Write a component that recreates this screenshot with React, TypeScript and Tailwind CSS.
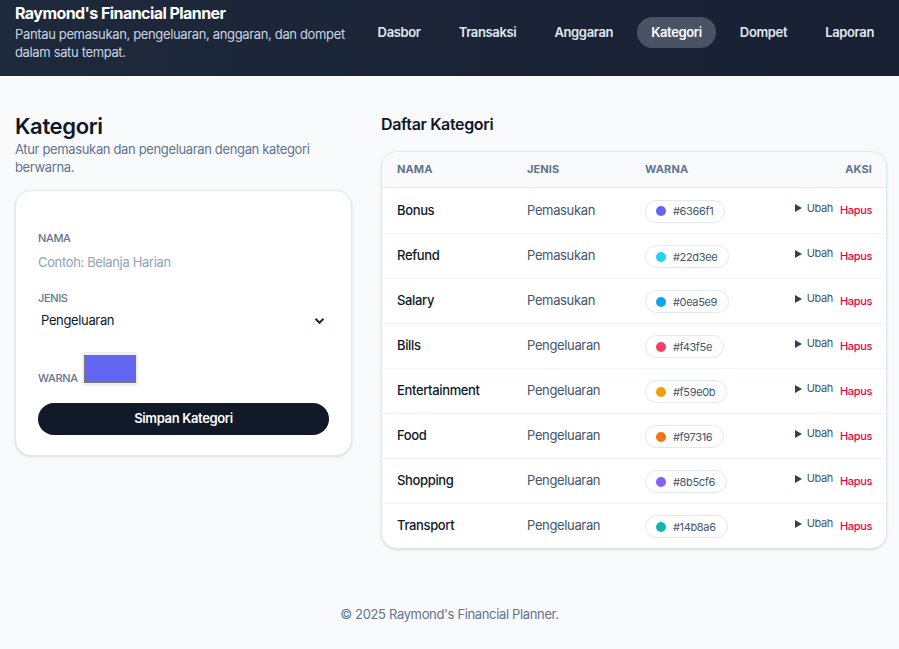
import React from "react";

const categories = [
  { name: "Bonus", type: "Pemasukan", color: "#6366f1" },
  { name: "Refund", type: "Pemasukan", color: "#22d3ee" },
  { name: "Salary", type: "Pemasukan", color: "#0ea5e9" },
  { name: "Bills", type: "Pengeluaran", color: "#f43f5e" },
  { name: "Entertainment", type: "Pengeluaran", color: "#f59e0b" },
  { name: "Food", type: "Pengeluaran", color: "#f97316" },
  { name: "Shopping", type: "Pengeluaran", color: "#8b5cf6" },
  { name: "Transport", type: "Pengeluaran", color: "#14b8a6" },
];

const navItems = ["Dasbor", "Transaksi", "Anggaran", "Kategori", "Dompet", "Laporan"];

const App: React.FC = () => {
  return (
    <div className="min-h-screen bg-[#f8fafc] font-['Inter','Liberation_Sans',sans-serif] tracking-[-0.022em] text-slate-900">
      {/* Header */}
      <header className="flex items-center bg-linear-to-r from-[#1e293b] to-[#182033] pl-[15px] pr-[11px] pt-[1px] pb-[15px]">
        <div className="w-[340px] shrink-0">
          <h1 className="text-[16px] font-bold leading-[24px] tracking-[-0.035em] text-white">
            Raymond's Financial Planner
          </h1>
          <p className="text-[13px] leading-[18px] text-slate-300">
            Pantau pemasukan, pengeluaran, anggaran, dan dompet dalam satu tempat.
          </p>
        </div>
        <nav className="ml-auto flex items-center gap-[10px] pt-[2px]">
          {navItems.map((item) => (
            <a
              key={item}
              className={
                item === "Kategori"
                  ? "rounded-full bg-[#4a5365] px-[14px] py-[7px] text-[13px] font-semibold leading-[17px] text-white"
                  : "rounded-full px-[14px] py-[7px] text-[13px] font-semibold leading-[17px] text-slate-200"
              }
            >
              {item}
            </a>
          ))}
        </nav>
      </header>

      {/* Main */}
      <main className="flex gap-[29px] pl-[15px] pr-[12px] pt-[36px] pb-[40px]">
        {/* Form column */}
        <section className="w-[337px] shrink-0">
          <h2 className="text-[22px] font-semibold leading-[28px] text-slate-900">Kategori</h2>
          <p className="text-[13px] leading-[18px] text-slate-500">
            Atur pemasukan dan pengeluaran dengan kategori berwarna.
          </p>

          <div className="mt-[14px] rounded-2xl border border-slate-200 bg-white px-[22px] pt-[39px] pb-[20px] shadow-sm">
            <label className="block text-[11px] font-medium uppercase leading-[16px] text-slate-500">
              Nama
            </label>
            <input
              placeholder="Contoh: Belanja Harian"
              className="mt-[4px] block h-[24px] w-full text-[13px] text-slate-900 outline-none placeholder:text-slate-400"
            />

            <label className="mt-[16px] block text-[11px] font-medium uppercase leading-[16px] text-slate-500">
              Jenis
            </label>
            <div className="mt-[3px] flex h-[24px] items-center justify-between pl-[3px] pr-[4px]">
              <span className="text-[13px] text-slate-900">Pengeluaran</span>
              <svg width="11" height="8" viewBox="0 0 11 8" fill="none">
                <path d="M1.5 1.8 5.5 5.8 9.5 1.8" stroke="#1e293b" strokeWidth="2" />
              </svg>
            </div>

            <div className="mt-[19px] flex items-end gap-[4px]">
              <span className="pb-[1px] text-[11px] font-medium uppercase leading-[14px] text-slate-500">
                Warna
              </span>
              <div className="h-[34px] w-[56px] rounded-[3px] bg-[#efefef] px-[2px] py-[3px]">
                <div className="h-full w-full border border-[#767676] bg-[#6366f1]" />
              </div>
            </div>

            <button className="mt-[17px] h-[32px] w-full rounded-full bg-[#111827] text-[13px] font-semibold text-white">
              Simpan Kategori
            </button>
          </div>
        </section>

        {/* Table column */}
        <section className="flex-1">
          <h2 className="text-[16px] font-semibold leading-[24px] text-slate-900">Daftar Kategori</h2>
          <div className="mt-[15px] overflow-hidden rounded-2xl border border-slate-200 bg-white shadow-sm">
            <div className="grid h-[36px] grid-cols-[130px_118px_1fr_auto] items-center border-b border-slate-200 bg-slate-50 pr-[14px] text-[11px] font-bold uppercase tracking-[0.01em] text-slate-500">
              <span className="pl-[15px]">Nama</span>
              <span className="pl-[15px]">Jenis</span>
              <span className="pl-[15px]">Warna</span>
              <span className="text-right">Aksi</span>
            </div>
            {categories.map((c, i) => (
              <div
                key={c.name}
                className={`grid h-[45px] grid-cols-[130px_118px_1fr_auto] items-center pr-[14px] ${
                  i > 0 ? "border-t border-slate-100" : ""
                }`}
              >
                <span className="pl-[15px] text-[13px] font-medium text-slate-900">{c.name}</span>
                <span className="pl-[15px] text-[13px] text-slate-600">{c.type}</span>
                <span className="pl-[15px]">
                  <span className="inline-flex h-[23px] items-center gap-[7px] rounded-full border border-slate-200 bg-white pl-[10px] pr-[11px]">
                    <span className="h-[10px] w-[10px] rounded-full" style={{ backgroundColor: c.color }} />
                    <span className="text-[11px] text-slate-600">{c.color}</span>
                  </span>
                </span>
                <span className="flex items-center gap-[7px]">
                  <span className="-mt-[5px] flex items-center gap-[5px] text-[11px] text-slate-600">
                    <svg width="7" height="8" viewBox="0 0 7 8">
                      <path d="M0 0 7 4 0 8Z" fill="#334155" />
                    </svg>
                    Ubah
                  </span>
                  <span className="text-[11px] font-medium text-rose-600">Hapus</span>
                </span>
              </div>
            ))}
          </div>
        </section>
      </main>

      <footer className="py-[16px] text-center text-[13px] leading-[18px] text-slate-500">
        © 2025 Raymond's Financial Planner.
      </footer>
    </div>
  );
};

export default App;
